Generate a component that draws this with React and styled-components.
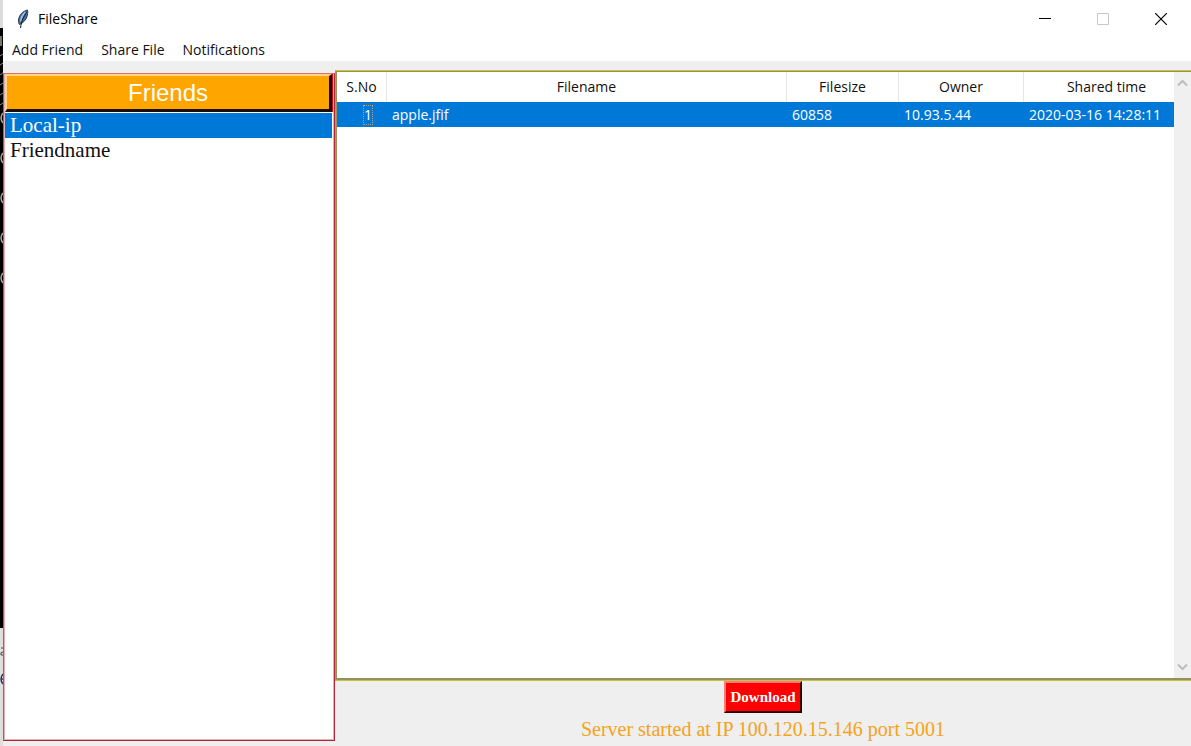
import React, { useState } from "react";
import styled, { createGlobalStyle } from "styled-components";

const Global = createGlobalStyle`
  * { box-sizing: border-box; }
  body { margin: 0; background: #efefef; }
  button { font: inherit; color: inherit; margin: 0; }
`;

const ui = `"Open Sans", "Noto Sans", sans-serif`;
const serif = `"Liberation Serif", "Times New Roman", serif`;

const Desktop = styled.div`
  display: flex;
  min-height: 100vh;
  font-family: ${ui};
  font-size: 14px;
  line-height: 20px;
  color: #111;
`;

const Backdrop = styled.div`
  flex: 0 0 3px;
  display: flex;
  flex-direction: column;
  overflow: hidden;
`;

const Strip = styled.div`
  flex: ${(p) => p.$flex};
  background: ${(p) => p.$bg};
  svg { display: block; }
`;

const Window = styled.main`
  flex: 1;
  min-width: 0;
  display: flex;
  flex-direction: column;
  background: #efefef;
`;

const TitleBar = styled.header`
  display: flex;
  align-items: center;
  height: 38px;
  padding: 0 1px 0 13px;
  background: #fff;
`;

const Title = styled.h1`
  flex: 1;
  margin: 0;
  padding-left: 8px;
  font-size: 14px;
  font-weight: 400;
  color: #000;
`;

const Caption = styled.button`
  display: grid;
  place-items: center;
  width: 58px;
  height: 38px;
  padding: 0;
  border: 0;
  background: none;
  color: ${(p) => (p.disabled ? "#c8c8c8" : "#000")};
`;

const MenuBar = styled.nav`
  display: flex;
  gap: 18px;
  height: 23px;
  padding-left: 9px;
  background: #fff;
`;

const MenuItem = styled.button`
  padding: 0;
  height: 24px;
  border: 0;
  background: none;
  white-space: nowrap;
`;

const Body = styled.div`
  flex: 1;
  display: flex;
`;

const Sidebar = styled.section`
  flex: 0 0 332px;
  display: flex;
  flex-direction: column;
  margin: 12px 0 5px;
  padding: 0 1px 1px;
  border: 1px solid #b02636;
  border-top-color: #ee6a5c;
  border-left-color: #d8485c;
  background: #e6b0b6;
`;

const FriendsHead = styled.div`
  display: flex;
  background: #d00a10;
  padding-right: 1px;
`;

const FriendsButton = styled.button`
  flex: 1;
  height: 38px;
  padding: 0;
  border: solid;
  border-width: 2px 3px 3px 2px;
  border-color: #ffd58a #1a0d00 #1a0d00 #ffd58a;
  background: #ffa500;
  color: #fff;
  font: 24px/32px "Liberation Sans", Arial, sans-serif;
`;

const FriendList = styled.ul`
  flex: 1;
  list-style: none;
  margin: 0;
  padding: 1px 1px 0 0;
  background: #fff;
  font: 21px/25px ${serif};
`;

const Friend = styled.li`
  padding-left: 5px;
  background: ${(p) => (p["aria-selected"] ? "#0078d7" : "#fff")};
  color: ${(p) => (p["aria-selected"] ? "#fff" : "#111")};
`;

const Content = styled.section`
  flex: 1;
  min-width: 0;
  display: flex;
  flex-direction: column;
  padding-top: 9px;
`;

const TableFrame = styled.div`
  flex: 1;
  display: flex;
  padding: 1px 0 2px 1px;
  border: 1px solid #c6c23c;
  border-right: 0;
  border-left-color: #c89a1c;
  background: #94915a;
`;

const TableArea = styled.div`
  flex: 1;
  min-width: 0;
  background: #fff;
`;

const Table = styled.table`
  width: 100%;
  table-layout: fixed;
  border-spacing: 0;
`;

const HeadCell = styled.th`
  width: ${(p) => p.$width};
  height: 30px;
  padding: 0 0 0 ${(p) => p.$shift || 0}px;
  border-right: ${(p) => (p.$last ? "0" : "1px solid #e5e5e5")};
  font-weight: 400;
  text-align: center;
  white-space: nowrap;
`;

const Cell = styled.td`
  height: 25px;
  padding: ${(p) => (p.$index ? "0 15px 0 0" : "0 0 0 5px")};
  line-height: 18px;
  text-align: ${(p) => (p.$index ? "right" : "left")};
  background: #0078d7;
  color: #fff;
  white-space: nowrap;
`;

const Focus = styled.span`
  display: inline-block;
  outline: 1px dotted #c79a6a;
`;

const ScrollBar = styled.div`
  flex: 0 0 17px;
  display: flex;
  flex-direction: column;
  justify-content: space-between;
  background: #f0f0f0;
`;

const ScrollButton = styled.button`
  display: grid;
  place-items: center;
  width: 17px;
  height: 22px;
  padding: 0;
  border: 0;
  background: none;
`;

const Footer = styled.footer`
  display: flex;
  flex-direction: column;
  align-items: center;
  height: 65px;
`;

const Download = styled.button`
  height: 32px;
  padding: 0 4px;
  border: 2px solid;
  border-color: #ff7a7a #300 #300 #ff7a7a;
  background: #f00;
  color: #fff;
  font: bold 15px/20px ${serif};
`;

const Status = styled.p`
  margin: 4px 0 0;
  color: #f5a31a;
  font: 20px/24px ${serif};
`;

const Feather = () => (
  <svg width="14" height="20" viewBox="0 0 14 20" aria-hidden="true">
    <path d="M11.5 1C7 2 3 6 2.500 11c0 2 0 3 1 4.500C7 14 10 11 11 7.500c.5-2 1-4 .5-6.500Z" fill="#44719f" stroke="#26384f" strokeWidth="1" />
    <path d="M9.500 3C6.500 5.500 5 9 4.500 12.500" fill="none" stroke="#a9c8e4" strokeWidth="1.600" />
    <path d="M10.500 3C8 8 5.500 11 4.500 19" fill="none" stroke="#101820" strokeWidth="1" />
  </svg>
);

const Chevron = ({ d }) => (
  <svg width="11" height="8" viewBox="0 0 11 8" aria-hidden="true">
    <path d={d} fill="none" stroke="#bcbcbc" strokeWidth="2" />
  </svg>
);

const columns = [
  { name: "S.No", width: "50px" },
  { name: "Filename", width: "auto" },
  { name: "Filesize", width: "112px" },
  { name: "Owner", width: "125px" },
  { name: "Shared time", width: "150px", shift: 15 },
];
const files = [["1", "apple.jfif", "60858", "10.93.5.44", "2020-03-16 14:28:11"]];
const friends = ["Local-ip", "Friendname"];
const ticks = [26, 35, 45, 55, 65, 75];
const arcs = [90, 130, 170, 210, 250];

export default function App() {
  const [selected, setSelected] = useState("Local-ip");
  return (
    <Desktop>
      <Global />
      <Backdrop aria-hidden="true">
        <Strip $flex="0 0 28px" $bg="#dcdcdc" />
        <Strip $flex="1" $bg="#000">
          <svg width="3" height="270">
            <rect y="8" width="2" height="10" fill="#77776c" />
            {ticks.map((y) => (
              <path key={y} d={`M0 ${y + 2}L3 ${y}`} stroke="#8a8a8a" />
            ))}
            {arcs.map((y) => (
              <path key={y} d={`M3 ${y - 5}Q-1 ${y} 3 ${y + 5}`} fill="none" stroke="#a8a898" strokeWidth="1.500" />
            ))}
          </svg>
        </Strip>
        <Strip $flex="0 0 118px" $bg="#dfe0dd">
          <svg width="3" height="70">
            <path d="M3 20H1M3 24Q0 24 1 27H3" fill="none" stroke="#443" />
            <path d="M3 46Q-1 51 3 56M1 51H3" fill="none" stroke="#335" strokeWidth="1.500" />
          </svg>
        </Strip>
      </Backdrop>
      <Window>
        <TitleBar>
          <Feather />
          <Title>FileShare</Title>
          <Caption aria-label="Minimize">
            <svg width="12" height="12"><path d="M0 5.500H12" stroke="currentColor" /></svg>
          </Caption>
          <Caption aria-label="Maximize" disabled>
            <svg width="12" height="12"><path d="M.5.5h11v11H.5Z" fill="none" stroke="currentColor" /></svg>
          </Caption>
          <Caption aria-label="Close">
            <svg width="12" height="12"><path d="M0 0 12 12M12 0 0 12" stroke="currentColor" strokeWidth="1.200" /></svg>
          </Caption>
        </TitleBar>
        <MenuBar>
          <MenuItem>Add Friend</MenuItem>
          <MenuItem>Share File</MenuItem>
          <MenuItem>Notifications</MenuItem>
        </MenuBar>
        <Body>
          <Sidebar>
            <FriendsHead>
              <FriendsButton>Friends</FriendsButton>
            </FriendsHead>
            <FriendList role="listbox" aria-label="Friends">
              {friends.map((name) => (
                <Friend key={name} role="option" aria-selected={name === selected} onClick={() => setSelected(name)}>
                  {name}
                </Friend>
              ))}
            </FriendList>
          </Sidebar>
          <Content>
            <TableFrame>
              <TableArea>
                <Table>
                  <thead>
                    <tr>
                      {columns.map((c, i) => (
                        <HeadCell key={c.name} scope="col" $width={c.width} $shift={c.shift} $last={i === columns.length - 1}>
                          {c.name}
                        </HeadCell>
                      ))}
                    </tr>
                  </thead>
                  <tbody>
                    {files.map((row) => (
                      <tr key={row[0]}>
                        {row.map((value, i) => (
                          <Cell key={i} $index={i === 0}>
                            {i === 0 ? <Focus>{value}</Focus> : value}
                          </Cell>
                        ))}
                      </tr>
                    ))}
                  </tbody>
                </Table>
              </TableArea>
              <ScrollBar>
                <ScrollButton aria-label="Scroll up"><Chevron d="M1 6.500 5.500 2 10 6.500" /></ScrollButton>
                <ScrollButton aria-label="Scroll down"><Chevron d="M1 1.500 5.500 6 10 1.500" /></ScrollButton>
              </ScrollBar>
            </TableFrame>
            <Footer>
              <Download>Download</Download>
              <Status role="status">Server started at IP 100.120.15.146 port 5001</Status>
            </Footer>
          </Content>
        </Body>
      </Window>
    </Desktop>
  );
}
